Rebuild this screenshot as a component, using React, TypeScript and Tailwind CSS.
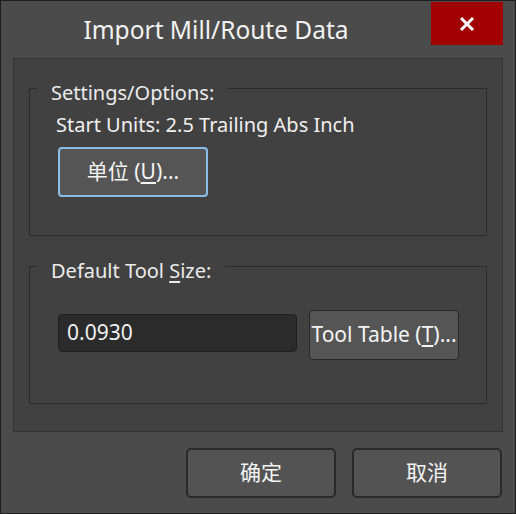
import React from 'react'

const font = { fontFamily: '"Noto Sans", "Noto Sans CJK SC", sans-serif' }

const GroupBox: React.FC<{ legend: React.ReactNode; className?: string; children: React.ReactNode }> = ({ legend, className, children }) => (
  <fieldset className={`mx-[15px] border border-[#2c2c2c] ${className ?? ''}`}>
    <legend className="ml-[7px] px-[14px] pt-[10px] text-[20px] leading-[24px] text-[#ececec]">{legend}</legend>
    {children}
  </fieldset>
)

export default function App() {
  return (
    <div
      className="w-[516px] h-[514px] border border-[#1e1e1e] bg-[#4b4b4b] flex flex-col text-[#f0f0f0]"
      style={font}
    >
      {/* title bar */}
      <div className="flex h-[57px] items-start">
        <div className="flex-1 pt-[13px] text-center text-[24.5px] leading-[32px] text-[#f2f2f2]">
          Import Mill/Route Data
        </div>
        <button className="mt-[1px] mr-[12px] w-[72px] h-[43px] bg-[#a00000] flex items-center justify-center">
          <svg width="16" height="16" viewBox="0 0 16 16">
            <path d="M2 2 L14 14 M14 2 L2 14" stroke="#ffffff" strokeWidth="3" />
          </svg>
        </button>
      </div>

      {/* content panel */}
      <div className="mx-[12px] h-[374px] border border-[#333333] bg-[#414141] flex flex-col pt-[12px]">
        <GroupBox legend="Settings/Options:" className="h-[165px]">
          <div className="pl-[26px] pt-[7px] text-[20px] leading-[26px]">Start Units: 2.5 Trailing Abs Inch</div>
          <button className="ml-[28px] mt-[9px] w-[150px] h-[50px] rounded-[4px] border-2 border-[#8cbde8] bg-[#555555] text-[21px] text-[#f4f4f4]">
            单位 (<span className="underline underline-offset-[3px]">U</span>)...
          </button>
        </GroupBox>

        <GroupBox legend={<>Default Tool <span className="underline underline-offset-[3px]">S</span>ize:</>} className="mt-[13px] h-[155px]">
          <div className="flex items-start pl-[28px] pt-[27px]">
            <div className="mt-[4px] w-[239px] h-[38px] rounded-[4px] border border-[#202020] bg-[#2b2b2b] pl-[8px] text-[21px] leading-[35px]">
              0.0930
            </div>
            <button className="ml-[12px] w-[150px] h-[50px] rounded-[4px] border border-[#282828] bg-[#555555] text-[21px] text-[#f4f4f4] whitespace-nowrap">
              Tool Table (<span className="underline underline-offset-[3px]">T</span>)...
            </button>
          </div>
        </GroupBox>
      </div>

      {/* footer buttons */}
      <div className="flex justify-end gap-[16px] pr-[13px] pt-[16px]">
        <button className="w-[150px] h-[50px] rounded-[5px] border-2 border-[#2a2a2a] bg-[#535353] text-[21px] text-[#f4f4f4]">
          确定
        </button>
        <button className="w-[150px] h-[50px] rounded-[5px] border-2 border-[#2a2a2a] bg-[#535353] text-[21px] text-[#f4f4f4]">
          取消
        </button>
      </div>
    </div>
  )
}
